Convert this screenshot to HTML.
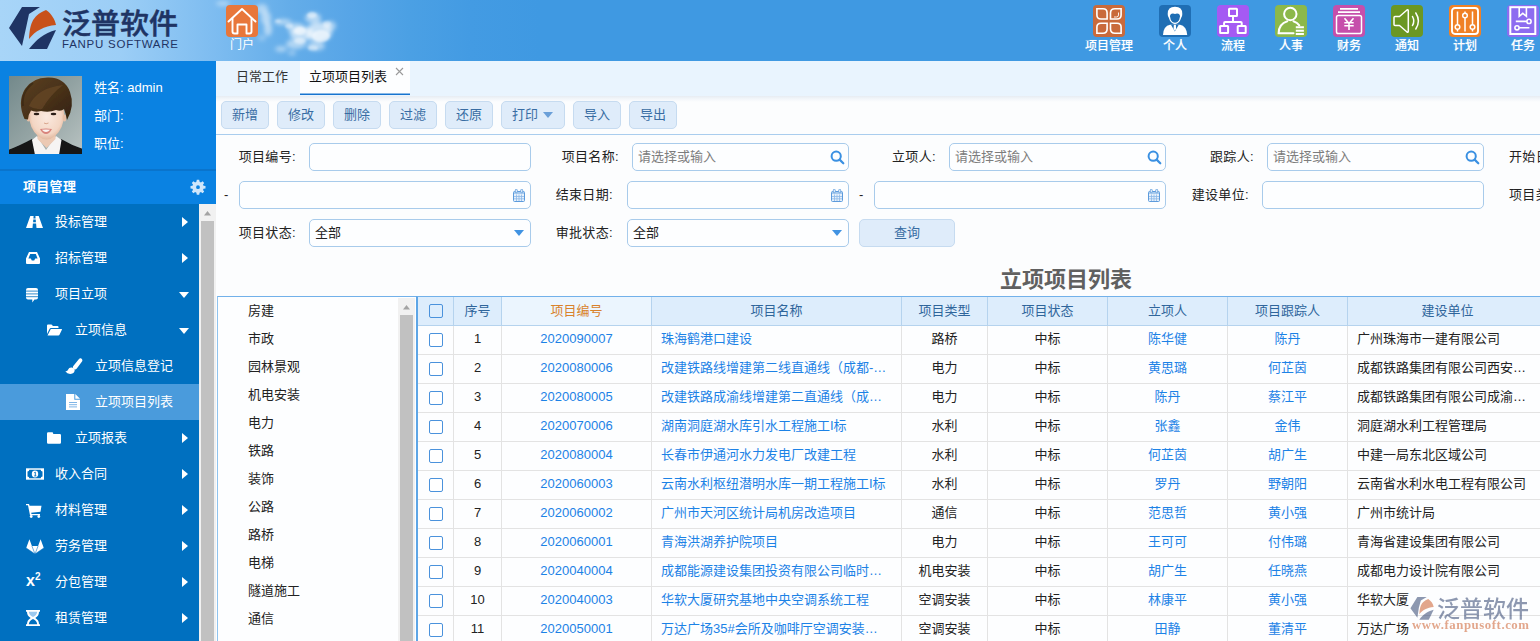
<!DOCTYPE html>
<html lang="zh-CN">
<head>
<meta charset="utf-8">
<title>立项项目列表</title>
<style>
*{box-sizing:border-box;margin:0;padding:0}
html,body{width:1540px;height:641px;overflow:hidden;background:#fcfdfe}
body{position:relative;font-family:"Liberation Sans","Noto Sans CJK SC",sans-serif;font-size:13px;color:#222;line-height:1}
.abs{position:absolute}
/* header */
#hdr{position:absolute;left:0;top:0;width:1540px;height:61px;overflow:hidden;
 background:linear-gradient(90deg,#a8d5f8 0px,#9ccef6 120px,#7dbcf0 216px,#64ade9 290px,#57a5e7 350px,#4ba0e4 410px,#439be3 470px,#3f99e2 540px,#3f99e2 1540px)}
#hdr .cloud{position:absolute;border-radius:50%;background:#fff;filter:blur(6px)}
.nav{position:absolute;top:5px;width:58px;height:50px;text-align:center;color:#fff;font-size:12px}
.nav .ic{position:absolute;left:13px;top:0;width:32px;height:32px;border-radius:4px}
.nav .lb{position:absolute;left:-10px;right:-10px;top:34px;line-height:14px;white-space:nowrap;font-weight:500;text-shadow:0 0 1px rgba(255,255,255,.35)}
/* sidebar */
#side{position:absolute;left:0;top:61px;width:216px;height:580px;background:#0070c0}
#user{position:absolute;left:0;top:0;width:216px;height:108px;background:#0a82e2}
#user .t{position:absolute;left:94px;color:#fff;font-size:13px;line-height:16px;white-space:nowrap}
#mtitle{position:absolute;left:0;top:108px;width:216px;height:35px;background:#0a82e2;border-top:2px solid #0a74cc;color:#fff;font-weight:bold;font-size:13px}
#mtitle span{position:absolute;left:23px;letter-spacing:.3px;top:8px;line-height:16px}
.mi{position:absolute;left:0;width:199px;height:36px;color:#fff;font-size:13px}
.mi .tx{position:absolute;top:10px;line-height:16px;white-space:nowrap}
.mi svg{position:absolute}
.mi .ar{position:absolute;left:182px;top:13px;width:0;height:0;border-left:6px solid #fff;border-top:5px solid transparent;border-bottom:5px solid transparent}
.mi .ad{position:absolute;left:179px;top:16px;width:0;height:0;border-top:6px solid #fff;border-left:5px solid transparent;border-right:5px solid transparent}
.mi.sel{background:#4a9bdc}
#sscroll{position:absolute;left:199px;top:143px;width:17px;height:437px;background:#f1f1f1}
#sscroll .th{position:absolute;left:2px;top:17px;width:13px;height:420px;background:#c1c1c1}
/* main */
#tabs{position:absolute;left:216px;top:61px;width:1324px;height:35px;background:#e9f4fe}
#tabs .tb{position:absolute;top:0;height:35px;font-size:13px;line-height:16px;color:#333}
#tbar{position:absolute;left:216px;top:96px;width:1324px;height:39px;background:linear-gradient(#e7ecf2 0,#f3f6fa 3px,#fcfdfe 6px);border-bottom:1px solid #a9cdee}
.btn{position:absolute;top:5px;height:28px;border:1px solid #c6dbf0;border-radius:5px;background:#dfecfa;color:#386ca3;font-size:13px;text-align:center;line-height:25px}
.lab{position:absolute;letter-spacing:.35px;font-size:13px;line-height:16px;color:#222;white-space:nowrap;text-align:right}
.inp{position:absolute;height:28px;border:1px solid #a8cbeb;border-radius:5px;background:#fdfeff;font-size:13px;line-height:26px;color:#222;padding-left:5px;white-space:nowrap}
.inp.ph{color:#7d7d7d;padding-left:5px}
/* grid */
#tree{position:absolute;left:217px;top:296px;width:199px;height:345px;border-top:1px solid #72b1ea;border-left:1px solid #8fc3ee;background:#fdfeff}
#tree .n{position:absolute;left:30px;margin-top:-1px;font-size:13px;line-height:16px;color:#222;white-space:nowrap}
#grid{position:absolute;left:416px;top:296px;width:1124px;height:345px;border-top:1px solid #72b1ea;border-left:2px solid #5ea6e6;background:#fdfeff;overflow:hidden}
.hc{position:absolute;top:0;height:29px;background:#ddedfc;border-right:1px solid #b5d3ee;border-bottom:1px solid #b5d3ee;text-align:center;font-size:13px;line-height:27px;color:#2f659b;white-space:nowrap}
.row{position:absolute;left:0;width:1130px;height:29px;border-bottom:1px solid #e3e3e3}
.c{position:absolute;top:0;height:29px;border-right:1px solid #e3e3e3;text-align:center;font-size:13px;line-height:26px;color:#222;white-space:nowrap;overflow:hidden}
.c.l{text-align:left;padding-left:9px}
.c.b{color:#1c82e6}
.cb{position:absolute;left:11px;top:7px;width:14px;height:14px;border:1px solid #4a92dc;border-radius:2px;background:#fff}
</style>
</head>
<body>
<div id="hdr">
<!-- clouds -->
<svg class="abs" style="left:200px;top:0" width="180" height="61" viewBox="200 0 180 61">
 <defs><filter id="cb" x="-30%" y="-30%" width="160%" height="160%"><feGaussianBlur stdDeviation="2"/></filter>
 <filter id="cb2" x="-30%" y="-30%" width="160%" height="160%"><feGaussianBlur stdDeviation="1.200"/></filter></defs>
 <g fill="#fff" filter="url(#cb)">
  <ellipse cx="223" cy="3.500" rx="7" ry="2.500" opacity=".4"/>
  <ellipse cx="262" cy="9" rx="6" ry="5" opacity=".45"/>
  <ellipse cx="266" cy="18" rx="5" ry="7" opacity=".5"/>
  <ellipse cx="268" cy="29" rx="4" ry="7" opacity=".5"/>
  <ellipse cx="262" cy="38" rx="4" ry="3" opacity=".25"/>
  <ellipse cx="283" cy="22" rx="9" ry="3" opacity=".5"/>
  <ellipse cx="296" cy="28" rx="9" ry="5" opacity=".5"/>
  <ellipse cx="302" cy="34" rx="12" ry="7" opacity=".6"/>
  <ellipse cx="313" cy="18" rx="8" ry="5" opacity=".55"/>
  <ellipse cx="319" cy="32" rx="13" ry="10" opacity=".65"/>
  <ellipse cx="330" cy="26" rx="6" ry="5" opacity=".5"/>
  <ellipse cx="296" cy="44" rx="10" ry="5" opacity=".5"/>
  <ellipse cx="316" cy="46" rx="9" ry="4.500" opacity=".5"/>
  <ellipse cx="281" cy="49" rx="6" ry="3" opacity=".45"/>
  <ellipse cx="292" cy="53" rx="4" ry="2.500" opacity=".35"/>
 </g>
 <g fill="#fff" filter="url(#cb2)">
  <ellipse cx="312" cy="15" rx="5" ry="3" opacity=".5"/>
  <ellipse cx="300" cy="31" rx="6" ry="4" opacity=".5"/>
  <ellipse cx="321" cy="36" rx="9" ry="6" opacity=".55"/>
  <ellipse cx="300" cy="41" rx="6" ry="3" opacity=".4"/>
  <ellipse cx="289" cy="26" rx="4" ry="2.500" opacity=".4"/>
  <ellipse cx="327" cy="24" rx="4" ry="3" opacity=".4"/>
  <ellipse cx="313" cy="48" rx="5" ry="2.500" opacity=".4"/>
  <ellipse cx="278" cy="21" rx="3" ry="1.500" opacity=".4"/>
 </g>
</svg>
<!-- logo -->
<svg class="abs" style="left:0;top:0" width="216" height="61" viewBox="0 0 216 61">
 <polygon points="9,28 22,7 40,7 29,14 26,28 22,46" fill="#1f3464"/>
 <path d="M29,39 C30,26 31,16 46,10 C52,14 55,20 56,25 C44,26 35,31 29,39 Z" fill="#c8511b"/>
 <path d="M29,49 C36,40 44,33 56,30 L47,49 Z" fill="#1f3464"/>
 <text x="62" y="34" font-family="'Liberation Sans','Noto Sans CJK SC',sans-serif" font-size="28.5" font-weight="500" fill="#1f3464" stroke="#1f3464" stroke-width=".500" textLength="116" lengthAdjust="spacingAndGlyphs">泛普软件</text>
 <text x="62" y="48" font-family="'Liberation Sans',sans-serif" font-size="11.5" fill="#1f3464" textLength="116" lengthAdjust="spacing">FANPU SOFTWARE</text>
</svg>
<!-- home -->
<div class="nav" style="left:213px"><div class="ic" style="background:#e8773b">
 <svg width="32" height="32" viewBox="0 0 32 32" fill="none" stroke="#fff" stroke-width="1.9" stroke-linejoin="round" stroke-linecap="round"><path d="M2.5,16.5 L16,4 L29.5,16.5"/><path d="M6.5,13.5 V26.5 Q6.5,28.5 8.5,28.5 H11.5 V19.5 H20.5 V28.5 H23.5 Q25.5,28.5 25.5,26.5 V13.5"/></svg>
 </div><div class="lb" style="top:33px;font-weight:400;text-shadow:none">门户</div></div>
<div class="nav" style="left:1080px"><div class="ic" style="background:#c96a3b"><svg width="32" height="32" viewBox="0 0 32 32"><g fill="none" stroke="#fff" stroke-width="1.600" stroke-linejoin="miter"><path d="M3.900,3.800 H10 Q14.100,3.800 14.100,8 V14 H8 Q3.900,14 3.900,10 Z"/><path d="M28.100,3.800 H22 Q17.500,3.800 17.500,8 V14 H24 Q28.100,14 28.100,10 Z"/><path d="M3.900,28.200 H10 Q14.100,28.200 14.100,24 V18.300 H8 Q3.900,18.300 3.900,22 Z"/><path d="M28.100,28.200 H22 Q17.500,28.200 17.500,24 V18.300 H24 Q28.100,18.300 28.100,22 Z"/><path d="M21,12 H23.500 Q25.500,12 25.500,10 V7.500" stroke-width=".900"/></g></svg></div><div class="lb">项目管理</div></div>
<div class="nav" style="left:1146px"><div class="ic" style="background:#1f6eb4"><svg width="32" height="32" viewBox="0 0 32 32"><g fill="#fff"><path d="M4,29.900 Q4.500,21 11,19.800 H21 Q27.500,21 28.200,29.900 Z"/><path d="M12,19.700 H19.700 L15.850,26.500 Z" fill="#1f6eb4"/><path d="M14.800,19.700 H16.900 L17.100,24 L15.850,26 L14.600,24 Z"/><path d="M8.700,9 Q8.500,1.800 16,1.800 Q23.500,1.800 23.300,9 Q23.300,11 22.300,12.500 Q21.500,16 19,18 Q16,19.800 13,18 Q10.500,16 9.700,12.500 Q8.700,11 8.700,9 Z"/><path d="M10.900,11 Q11.500,8.500 14,8.600 Q16,9.500 18,8.600 Q20.500,8.500 21.100,11 Q20.800,15 18.500,17 Q16,18.500 13.500,17 Q11.200,15 10.900,11 Z" fill="#1f6eb4"/></g></svg></div><div class="lb">个人</div></div>
<div class="nav" style="left:1204px"><div class="ic" style="background:#a55af3"><svg width="32" height="32" viewBox="0 0 32 32"><g fill="none" stroke="#fff" stroke-width="2" stroke-linejoin="round"><rect x="12" y="3.800" width="8" height="7.100" rx=".500"/><path d="M16,11.500 V17.100 M7.100,20.500 V18.100 Q7.100,17.100 8.100,17.100 H23.700 Q24.700,17.100 24.700,18.100 V20.500"/><rect x="3.100" y="21" width="8" height="7.100" rx=".500"/><rect x="20.700" y="21" width="8" height="7.100" rx=".500"/></g></svg></div><div class="lb">流程</div></div>
<div class="nav" style="left:1262px"><div class="ic" style="background:#8cb84a"><svg width="32" height="32" viewBox="0 0 32 32"><g fill="none" stroke="#fff" stroke-width="2" stroke-linecap="round"><circle cx="15.300" cy="9" r="6.200"/><path d="M18.500,28.200 H3.600 Q3.800,19 12.300,16.300 M18.500,16.300 Q22.500,17.800 24.300,20.300"/><path d="M20.800,22.300 H28.900 M20.800,25.700 H28.900 M20.800,29 H28.900" stroke-linecap="butt" stroke-width="1.900"/></g></svg></div><div class="lb">人事</div></div>
<div class="nav" style="left:1320px"><div class="ic" style="background:#c64fab"><svg width="32" height="32" viewBox="0 0 32 32"><g fill="none" stroke="#fff" stroke-width="1.500"><path d="M7,3.900 H25 M5,7.100 H27" stroke-width="1.700"/><rect x="3.500" y="10.500" width="25" height="18" rx="1.800"/><path d="M11.500,13.300 L16,18.500 L20.500,13.300 M16,18.500 V25 M11.300,17.800 H20.700 M11.300,20.700 H20.700" stroke-width="1.600"/></g></svg></div><div class="lb">财务</div></div>
<div class="nav" style="left:1378px"><div class="ic" style="background:#6b9723"><svg width="32" height="32" viewBox="0 0 32 32"><g fill="none" stroke="#fff" stroke-width="1.500" stroke-linejoin="round" stroke-linecap="round"><path d="M4,11.500 H8.500 L16,5 Q17.300,4.200 17.300,6 V26 Q17.300,27.800 16,27 L8.500,20.500 H4 Q3,20.500 3,19.500 V12.500 Q3,11.500 4,11.500 Z"/><path d="M21.500,11.500 Q24,16 21.500,20.500 M24.800,8 Q30,16 24.800,24"/></g></svg></div><div class="lb">通知</div></div>
<div class="nav" style="left:1436px"><div class="ic" style="background:#f08126"><svg width="32" height="32" viewBox="0 0 32 32"><g fill="none" stroke="#fff" stroke-width="1.500"><rect x="3" y="3" width="26" height="26" rx="3" stroke-width="1.900"/><path d="M8.500,6.500 V19.500 M8.500,24.500 V26.500 M16,6.500 V8 M16,13 V26.500 M23.500,6.500 V19.500 M23.500,24.500 V26.500"/><circle cx="8.500" cy="22" r="2.300"/><circle cx="16" cy="10.500" r="2.300"/><circle cx="23.500" cy="22" r="2.300"/></g></svg></div><div class="lb">计划</div></div>
<div class="nav" style="left:1494px"><div class="ic" style="background:#8d6cf0"><svg width="32" height="32" viewBox="0 0 32 32"><g fill="none" stroke="#fff" stroke-width="1.600"><rect x="3.300" y="2.200" width="25" height="26.800" stroke-width="2"/><path d="M12.200,2.500 V11.300 L15.800,8.300 L19.400,11.300 V2.500"/><path d="M8.800,16.400 H19.800 M12.200,22.800 H22.400"/><circle cx="22" cy="16.400" r="2.100"/><circle cx="10" cy="22.800" r="2.100"/></g></svg></div><div class="lb">任务</div></div>

</div>
<div id="side">
<div id="user">
 <svg class="abs" style="left:9px;top:15px" width="73" height="78" viewBox="0 0 73 78">
  <defs><linearGradient id="avbg" x1="0" y1="0" x2="1" y2="1"><stop offset="0" stop-color="#73898b"/><stop offset=".5" stop-color="#93a3a3"/><stop offset="1" stop-color="#b9c3c2"/></linearGradient>
  <radialGradient id="avsk" cx=".5" cy=".45" r=".6"><stop offset="0" stop-color="#fbe9df"/><stop offset=".7" stop-color="#f3d6c4"/><stop offset="1" stop-color="#dcae92"/></radialGradient>
  <linearGradient id="avhr" x1="0" y1="0" x2="1" y2="1"><stop offset="0" stop-color="#5a4022"/><stop offset=".5" stop-color="#4a3219"/><stop offset="1" stop-color="#33220f"/></linearGradient>
  <filter id="avbl" x="-10%" y="-10%" width="120%" height="120%"><feGaussianBlur stdDeviation=".600"/></filter></defs>
  <rect width="73" height="78" fill="url(#avbg)"/>
  <g filter="url(#avbl)">
  <path d="M-1,79 L-1,74 Q10,70 23,63 L30,79 Z M74,79 L74,73 Q62,69 52,63 L44,79 Z" fill="#121317"/>
  <path d="M23,64 L28,60 L37,74 L47,60 L52.500,64 L50,79 H26 Z" fill="#f6f4f3"/>
  <path d="M28.500,56 H46.500 V63 L37.500,72 L28.500,63 Z" fill="#ecc9b3"/>
  <path d="M20,38 Q20,52 29,60 Q37.500,67 46,60 Q55,52 55,38 Q55,24 37.500,22 Q20,24 20,38 Z" fill="url(#avsk)"/>
  <ellipse cx="19.500" cy="42" rx="1.800" ry="3.500" fill="#e6bfa6"/><ellipse cx="55.500" cy="42" rx="1.800" ry="3.500" fill="#e6bfa6"/>
  <path d="M15.500,43 Q8,26 16,13 Q24,1 40,1.500 Q56,2 61,16 Q66,30 58,44 Q57,38 55,33 Q52,36 47,34 Q40,37 32,35 Q26,36.500 22,34.500 Q19.500,38 19,43.500 Z" fill="url(#avhr)"/>
  <path d="M20,30 Q28,12 54,9 Q42,18 33,33 Q26,34 20,30 Z" fill="#6d4d2a" opacity=".6"/>
  <path d="M14,30 Q12,16 24,7" stroke="#2e1f0e" stroke-width="2" fill="none" opacity=".5"/>
  <ellipse cx="27.500" cy="38" rx="2.800" ry="1.300" fill="#2a1c14"/><ellipse cx="44.500" cy="38" rx="2.800" ry="1.300" fill="#2a1c14"/>
  <path d="M35,47 Q37,48.500 39.500,47" stroke="#d9a58c" stroke-width="1" fill="none"/>
  <path d="M31,53 Q37,52 43,53 Q40.500,58 37,58 Q33.500,58 31,53 Z" fill="#d8847c"/>
  <path d="M32.800,53.800 Q37,53.300 41.200,53.800 Q39,56 37,56 Q35,56 32.800,53.800 Z" fill="#fbf6f3"/>
  </g>
 </svg>
 <div class="t" style="top:19px">姓名: admin</div>
 <div class="t" style="top:47px">部门:</div>
 <div class="t" style="top:75px">职位:</div>
</div>
<div id="mtitle"><span>项目管理</span>
 <svg class="abs" style="left:190px;top:8px" width="16" height="16" viewBox="0 0 16 16"><path d="M6.800,0.800 H9.200 L9.600,2.800 L10.900,3.400 L12.600,2.200 L14.200,3.900 L13,5.500 L13.500,6.800 L15.500,7.100 V9.400 L13.500,9.700 L13,11 L14.200,12.600 L12.600,14.300 L10.900,13.100 L9.600,13.700 L9.200,15.700 H6.800 L6.400,13.700 L5.100,13.100 L3.400,14.300 L1.800,12.600 L3,11 L2.500,9.700 L0.500,9.400 V7.100 L2.500,6.800 L3,5.500 L1.800,3.900 L3.400,2.200 L5.100,3.400 L6.400,2.800 Z M8,6.300 A1.900,1.900 0 1 0 8,10.100 A1.900,1.900 0 1 0 8,6.300 Z" fill="#cfe6fb" fill-rule="evenodd"/></svg>
</div>
<div class="mi" style="top:143px"><svg style="left:26px;top:12px" width="17" height="12" viewBox="0 0 17 12"><path d="M4.300,0 H7.600 L7.400,2.500 H9.600 L9.400,0 H12.700 L17,12 H10.500 L10.100,7.500 H6.900 L6.500,12 H0 Z" fill="#fff"/><path d="M7.300,3.500 H9.700 L9.900,6.300 H7.100 Z" fill="#0070c0"/></svg><div class="tx" style="left:55px">投标管理</div><div class="ar"></div></div>
<div class="mi" style="top:179px"><svg style="left:26px;top:12px" width="14" height="12" viewBox="0 0 14 12"><path d="M3,0 H11 L14,6.500 V11 Q14,12 13,12 H1 Q0,12 0,11 V6.500 Z M4.200,2 L2.400,6.500 H4.800 L5.800,8.500 H8.200 L9.200,6.500 H11.600 L9.800,2 Z" fill="#fff" fill-rule="evenodd"/></svg><div class="tx" style="left:55px">招标管理</div><div class="ar"></div></div>
<div class="mi" style="top:215px"><svg style="left:26px;top:12px" width="12" height="15" viewBox="0 0 12 15"><path d="M2,0 H10 Q12,0 12,2 V9.500 Q12,11.500 10,11.500 H8.500 L6.300,14.500 V11.500 H2 Q0,11.500 0,9.500 V2 Q0,0 2,0 Z" fill="#fff"/><path d="M0,3.100 H12 M0,5.900 H12 M0,8.700 H12" stroke="#0070c0" stroke-width=".800"/></svg><div class="tx" style="left:55px">项目立项</div><div class="ad"></div></div>
<div class="mi" style="top:251px"><svg style="left:46px;top:10px" width="16" height="16" viewBox="0 0 16 16"><path d="M1,3.500 Q1,2.500 2,2.500 H5.500 L7,4 H11.500 Q12.500,4 12.500,5 V6 H5 Q4,6 3.500,7 L1,12 Z" fill="#fff"/><path d="M4.800,7 H15.500 Q16.300,7 15.900,7.800 L13.500,12.700 Q13.200,13.500 12.300,13.500 H1.500 Z" fill="#fff"/></svg><div class="tx" style="left:75px">立项信息</div><div class="ad"></div></div>
<div class="mi" style="top:287px"><svg style="left:65px;top:10px" width="18" height="16" viewBox="0 0 18 16"><path d="M15.800,0.300 Q18.200,1.200 17,3.600 L11.800,10.600 Q10.300,12.300 8.600,10.900 Q7.200,9.500 8.500,7.800 L14,1 Q14.800,0 15.800,0.300 Z" fill="#fff"/><path d="M6.800,9.600 Q9.300,10 9.700,12 Q9.700,15 6.500,15.800 Q2.500,16.500 0.300,13.300 Q2.300,13.500 3,11.800 Q4,9.300 6.800,9.600 Z" fill="#fff"/></svg><div class="tx" style="left:95px">立项信息登记</div></div>
<div class="mi sel" style="top:323px"><svg style="left:66px;top:10px" width="14" height="16" viewBox="0 0 14 16"><path d="M0,0 H8.300 V5.700 H14 V16 H0 Z M9.300,0 L14,4.700 H9.300 Z" fill="#fff"/><path d="M3,8.500 H11 M3,10.700 H11 M3,12.900 H11" stroke="#7fb5e6" stroke-width="1"/></svg><div class="tx" style="left:95px">立项项目列表</div></div>
<div class="mi" style="top:359px"><svg style="left:46px;top:10px" width="16" height="16" viewBox="0 0 16 16"><path d="M1,3.500 Q1,2.300 2.200,2.300 H6 Q7.200,2.300 7.200,3.500 V4 H13.800 Q15,4 15,5.200 V12.500 Q15,13.700 13.800,13.700 H2.200 Q1,13.700 1,12.500 Z" fill="#fff"/></svg><div class="tx" style="left:75px">立项报表</div><div class="ar"></div></div>
<div class="mi" style="top:395px"><svg style="left:26px;top:12px" width="18" height="12" viewBox="0 0 18 12"><path d="M0,0.300 H18 V11.700 H0 Z" fill="#fff"/><path d="M3.300,1.800 H14.700 Q14.700,3.500 16.500,3.500 V8.500 Q14.700,8.500 14.700,10.200 H3.300 Q3.300,8.500 1.500,8.500 V3.500 Q3.300,3.500 3.300,1.800 Z" fill="#0070c0"/><ellipse cx="9" cy="6" rx="3.200" ry="3.400" fill="#fff"/><path d="M8.300,4.600 L9.300,4.100 V7.900 M8.200,7.900 H10.400" stroke="#0070c0" stroke-width=".900" fill="none"/></svg><div class="tx" style="left:55px">收入合同</div><div class="ar"></div></div>
<div class="mi" style="top:431px"><svg style="left:26px;top:12px" width="16" height="14" viewBox="0 0 16 14"><path d="M0,0 H3 L3.600,1.700 H15.500 L14.500,7.700 L5.200,8.700 L5.500,10 H14 V11.300 H4 L2,1.300 H0 Z" fill="#fff"/><circle cx="5.200" cy="12.500" r="1.400" fill="#fff"/><circle cx="12.800" cy="12.500" r="1.400" fill="#fff"/></svg><div class="tx" style="left:55px">材料管理</div><div class="ar"></div></div>
<div class="mi" style="top:467px"><svg style="left:26px;top:11px" width="18" height="15" viewBox="0 0 18 15"><path d="M3.400,0.200 L5.900,7 H12.100 L14.600,0.200 L17.800,9 L9,15 L0.200,9 Z" fill="#fff"/><path d="M5.900,7 L9,15 L12.100,7 M0.200,9 L9,15 L17.800,9" stroke="#0070c0" stroke-width=".700" fill="none" opacity=".8"/></svg><div class="tx" style="left:55px">劳务管理</div><div class="ar"></div></div>
<div class="mi" style="top:503px"><div class="tx" style="left:26px;top:9px;font-weight:bold;font-size:16px;font-family:'Liberation Sans',sans-serif">x<span style="font-size:10px;position:relative;top:-6px">2</span></div><div class="tx" style="left:55px">分包管理</div><div class="ar"></div></div>
<div class="mi" style="top:539px"><svg style="left:26px;top:10px" width="14" height="16" viewBox="0 0 14 16"><path d="M0,0 H14 V1.800 H13 Q13,6 9.300,8 Q13,10 13,14.200 H14 V16 H0 V14.200 H1 Q1,10 4.700,8 Q1,6 1,1.800 H0 Z" fill="#fff"/><path d="M2.800,1.800 H11.200 Q11,5 7,7 Q3,5 2.800,1.800 Z" fill="#9cc9ef"/><path d="M2.800,14.200 Q3,11 7,9 Q11,11 11.200,14.200 Z" fill="#0070c0"/></svg><div class="tx" style="left:55px">租赁管理</div><div class="ar"></div></div>
<div class="mi" style="top:575px"></div>
<div id="sscroll"><svg class="abs" style="left:0;top:0" width="17" height="17"><path d="M5,11.500 L8.500,7 L12,11.500 Z" fill="#a3a3a3"/></svg><div class="th"></div></div>
</div>
<div id="tabs">
 <div class="tb" style="left:20px;top:8px">日常工作</div>
 <div class="abs" style="left:84px;top:0;width:110px;height:34px;background:#fdfeff;border-bottom:1px solid #1874cf;box-shadow:inset 0 -1px 0 rgba(24,116,207,.5)"></div>
 <div class="tb" style="left:93px;top:8px;color:#111">立项项目列表</div>
 <svg class="abs" style="left:179px;top:6px" width="9" height="9" viewBox="0 0 9 9"><path d="M1,1 L8,8 M8,1 L1,8" stroke="#9a9a9a" stroke-width="1.100" fill="none"/></svg>
</div>
<div id="tbar">
<div class="btn" style="left:5px;width:48px">新增</div>
<div class="btn" style="left:61px;width:48px">修改</div>
<div class="btn" style="left:117px;width:48px">删除</div>
<div class="btn" style="left:173px;width:48px">过滤</div>
<div class="btn" style="left:229px;width:48px">还原</div>
<div class="btn" style="left:285px;width:64px;text-align:left;padding-left:10px">打印<span class="abs" style="left:41px;top:10px;width:0;height:0;border-top:6px solid #6a9fd8;border-left:5px solid transparent;border-right:5px solid transparent"></span></div>
<div class="btn" style="left:357px;width:48px">导入</div>
<div class="btn" style="left:413px;width:48px">导出</div>
</div>
<div id="form">
<div class="lab" style="left:176px;width:120px;top:149px">项目编号:</div>
<div class="inp " style="left:309px;top:143px;width:222px"></div>
<div class="lab" style="left:499px;width:120px;top:149px">项目名称:</div>
<div class="inp ph" style="left:632px;top:143px;width:217px">请选择或输入<svg class="abs" style="right:3px;top:6px" width="15" height="15" viewBox="0 0 15 15"><circle cx="6.200" cy="6.200" r="4.600" fill="none" stroke="#3a90e2" stroke-width="2"/><path d="M9.600,9.600 L13.300,13.300" stroke="#3a90e2" stroke-width="2.200" stroke-linecap="round"/></svg></div>
<div class="lab" style="left:816px;width:120px;top:149px">立项人:</div>
<div class="inp ph" style="left:949px;top:143px;width:217px">请选择或输入<svg class="abs" style="right:3px;top:6px" width="15" height="15" viewBox="0 0 15 15"><circle cx="6.200" cy="6.200" r="4.600" fill="none" stroke="#3a90e2" stroke-width="2"/><path d="M9.600,9.600 L13.300,13.300" stroke="#3a90e2" stroke-width="2.200" stroke-linecap="round"/></svg></div>
<div class="lab" style="left:1134px;width:120px;top:149px">跟踪人:</div>
<div class="inp ph" style="left:1267px;top:143px;width:217px">请选择或输入<svg class="abs" style="right:3px;top:6px" width="15" height="15" viewBox="0 0 15 15"><circle cx="6.200" cy="6.200" r="4.600" fill="none" stroke="#3a90e2" stroke-width="2"/><path d="M9.600,9.600 L13.300,13.300" stroke="#3a90e2" stroke-width="2.200" stroke-linecap="round"/></svg></div>
<div class="lab" style="left:1509px;top:149px;text-align:left">开始日期:</div>
<div class="lab" style="left:224px;top:187px;text-align:left">-</div>
<div class="inp " style="left:239px;top:181px;width:292px"><svg class="abs" style="right:5px;top:7px" width="12" height="13" viewBox="0 0 12 13"><rect x=".500" y="2.500" width="11" height="10" rx="1" fill="#e6f0fb" stroke="#5d9bdc"/><rect x="1" y="3" width="10" height="2" fill="#a9cbee"/><rect x="2.300" y=".300" width="2" height="3.400" rx=".900" fill="#eaf3fc" stroke="#5d9bdc" stroke-width=".800"/><rect x="7.700" y=".300" width="2" height="3.400" rx=".900" fill="#eaf3fc" stroke="#5d9bdc" stroke-width=".800"/><path d="M3.500,5.500 V12 M6,5.500 V12 M8.500,5.500 V12 M1,7.500 H11 M1,9.800 H11" stroke="#8db9e8" stroke-width=".800"/></svg></div>
<div class="lab" style="left:493px;width:120px;top:187px">结束日期:</div>
<div class="inp " style="left:627px;top:181px;width:222px"><svg class="abs" style="right:5px;top:7px" width="12" height="13" viewBox="0 0 12 13"><rect x=".500" y="2.500" width="11" height="10" rx="1" fill="#e6f0fb" stroke="#5d9bdc"/><rect x="1" y="3" width="10" height="2" fill="#a9cbee"/><rect x="2.300" y=".300" width="2" height="3.400" rx=".900" fill="#eaf3fc" stroke="#5d9bdc" stroke-width=".800"/><rect x="7.700" y=".300" width="2" height="3.400" rx=".900" fill="#eaf3fc" stroke="#5d9bdc" stroke-width=".800"/><path d="M3.500,5.500 V12 M6,5.500 V12 M8.500,5.500 V12 M1,7.500 H11 M1,9.800 H11" stroke="#8db9e8" stroke-width=".800"/></svg></div>
<div class="lab" style="left:859px;top:187px;text-align:left">-</div>
<div class="inp " style="left:874px;top:181px;width:292px"><svg class="abs" style="right:5px;top:7px" width="12" height="13" viewBox="0 0 12 13"><rect x=".500" y="2.500" width="11" height="10" rx="1" fill="#e6f0fb" stroke="#5d9bdc"/><rect x="1" y="3" width="10" height="2" fill="#a9cbee"/><rect x="2.300" y=".300" width="2" height="3.400" rx=".900" fill="#eaf3fc" stroke="#5d9bdc" stroke-width=".800"/><rect x="7.700" y=".300" width="2" height="3.400" rx=".900" fill="#eaf3fc" stroke="#5d9bdc" stroke-width=".800"/><path d="M3.500,5.500 V12 M6,5.500 V12 M8.500,5.500 V12 M1,7.500 H11 M1,9.800 H11" stroke="#8db9e8" stroke-width=".800"/></svg></div>
<div class="lab" style="left:1129px;width:120px;top:187px">建设单位:</div>
<div class="inp " style="left:1262px;top:181px;width:222px"></div>
<div class="lab" style="left:1509px;top:187px;text-align:left">项目类型:</div>
<div class="lab" style="left:176px;width:120px;top:225px">项目状态:</div>
<div class="inp " style="left:309px;top:219px;width:222px">全部<span class="abs" style="right:6px;top:10px;width:0;height:0;border-top:6px solid #4193e2;border-left:5px solid transparent;border-right:5px solid transparent"></span></div>
<div class="lab" style="left:493px;width:120px;top:225px">审批状态:</div>
<div class="inp " style="left:627px;top:219px;width:222px">全部<span class="abs" style="right:6px;top:10px;width:0;height:0;border-top:6px solid #4193e2;border-left:5px solid transparent;border-right:5px solid transparent"></span></div>
<div class="btn" style="left:859px;top:219px;width:96px;line-height:26px">查询</div>
<div class="abs" style="left:1000px;top:266px;font-size:22px;line-height:28px;font-weight:bold;color:#606060;white-space:nowrap">立项项目列表</div>
</div>
<div id="tree">
<div class="n" style="top:7px">房建</div>
<div class="n" style="top:35px">市政</div>
<div class="n" style="top:63px">园林景观</div>
<div class="n" style="top:91px">机电安装</div>
<div class="n" style="top:119px">电力</div>
<div class="n" style="top:147px">铁路</div>
<div class="n" style="top:175px">装饰</div>
<div class="n" style="top:203px">公路</div>
<div class="n" style="top:231px">路桥</div>
<div class="n" style="top:259px">电梯</div>
<div class="n" style="top:287px">隧道施工</div>
<div class="n" style="top:315px">通信</div>
<div class="abs" style="left:180px;top:1px;width:17px;height:345px;background:#f1f1f1"><svg class="abs" style="left:0;top:0" width="17" height="17"><path d="M5,11.500 L8.500,7 L12,11.500 Z" fill="#a3a3a3"/></svg><div class="abs" style="left:2px;top:17px;width:13px;height:330px;background:#c1c1c1"></div></div>
</div>
<div id="grid">
<div class="hc" style="left:0px;width:36px"><span class="cb" style="background:transparent"></span></div>
<div class="hc" style="left:36px;width:48px">序号</div>
<div class="hc" style="left:84px;width:150px;background:#ebf5fe;color:#d9822b">项目编号</div>
<div class="hc" style="left:234px;width:250px">项目名称</div>
<div class="hc" style="left:484px;width:86px">项目类型</div>
<div class="hc" style="left:570px;width:120px">项目状态</div>
<div class="hc" style="left:690px;width:120px">立项人</div>
<div class="hc" style="left:810px;width:120px">项目跟踪人</div>
<div class="hc" style="left:930px;width:200px">建设单位</div>
<div class="row" style="top:29px"><div class="c" style="left:0;width:36px"><span class="cb"></span></div><div class="c" style="left:36px;width:48px">1</div><div class="c b" style="left:84px;width:150px">2020090007</div><div class="c b l" style="left:234px;width:250px">珠海鹤港口建设</div><div class="c" style="left:484px;width:86px">路桥</div><div class="c" style="left:570px;width:120px">中标</div><div class="c b" style="left:690px;width:120px">陈华健</div><div class="c b" style="left:810px;width:120px">陈丹</div><div class="c l" style="left:930px;width:200px">广州珠海市一建有限公司</div></div>
<div class="row" style="top:58px"><div class="c" style="left:0;width:36px"><span class="cb"></span></div><div class="c" style="left:36px;width:48px">2</div><div class="c b" style="left:84px;width:150px">2020080006</div><div class="c b l" style="left:234px;width:250px">改建铁路线增建第二线直通线（成都-…</div><div class="c" style="left:484px;width:86px">电力</div><div class="c" style="left:570px;width:120px">中标</div><div class="c b" style="left:690px;width:120px">黄思璐</div><div class="c b" style="left:810px;width:120px">何芷茵</div><div class="c l" style="left:930px;width:200px">成都铁路集团有限公司西安…</div></div>
<div class="row" style="top:87px"><div class="c" style="left:0;width:36px"><span class="cb"></span></div><div class="c" style="left:36px;width:48px">3</div><div class="c b" style="left:84px;width:150px">2020080005</div><div class="c b l" style="left:234px;width:250px">改建铁路成渝线增建第二直通线（成…</div><div class="c" style="left:484px;width:86px">电力</div><div class="c" style="left:570px;width:120px">中标</div><div class="c b" style="left:690px;width:120px">陈丹</div><div class="c b" style="left:810px;width:120px">蔡江平</div><div class="c l" style="left:930px;width:200px">成都铁路集团有限公司成渝…</div></div>
<div class="row" style="top:116px"><div class="c" style="left:0;width:36px"><span class="cb"></span></div><div class="c" style="left:36px;width:48px">4</div><div class="c b" style="left:84px;width:150px">2020070006</div><div class="c b l" style="left:234px;width:250px">湖南洞庭湖水库引水工程施工I标</div><div class="c" style="left:484px;width:86px">水利</div><div class="c" style="left:570px;width:120px">中标</div><div class="c b" style="left:690px;width:120px">张鑫</div><div class="c b" style="left:810px;width:120px">金伟</div><div class="c l" style="left:930px;width:200px">洞庭湖水利工程管理局</div></div>
<div class="row" style="top:145px"><div class="c" style="left:0;width:36px"><span class="cb"></span></div><div class="c" style="left:36px;width:48px">5</div><div class="c b" style="left:84px;width:150px">2020080004</div><div class="c b l" style="left:234px;width:250px">长春市伊通河水力发电厂改建工程</div><div class="c" style="left:484px;width:86px">水利</div><div class="c" style="left:570px;width:120px">中标</div><div class="c b" style="left:690px;width:120px">何芷茵</div><div class="c b" style="left:810px;width:120px">胡广生</div><div class="c l" style="left:930px;width:200px">中建一局东北区域公司</div></div>
<div class="row" style="top:174px"><div class="c" style="left:0;width:36px"><span class="cb"></span></div><div class="c" style="left:36px;width:48px">6</div><div class="c b" style="left:84px;width:150px">2020060003</div><div class="c b l" style="left:234px;width:250px">云南水利枢纽潜明水库一期工程施工I标</div><div class="c" style="left:484px;width:86px">水利</div><div class="c" style="left:570px;width:120px">中标</div><div class="c b" style="left:690px;width:120px">罗丹</div><div class="c b" style="left:810px;width:120px">野朝阳</div><div class="c l" style="left:930px;width:200px">云南省水利水电工程有限公司</div></div>
<div class="row" style="top:203px"><div class="c" style="left:0;width:36px"><span class="cb"></span></div><div class="c" style="left:36px;width:48px">7</div><div class="c b" style="left:84px;width:150px">2020060002</div><div class="c b l" style="left:234px;width:250px">广州市天河区统计局机房改造项目</div><div class="c" style="left:484px;width:86px">通信</div><div class="c" style="left:570px;width:120px">中标</div><div class="c b" style="left:690px;width:120px">范思哲</div><div class="c b" style="left:810px;width:120px">黄小强</div><div class="c l" style="left:930px;width:200px">广州市统计局</div></div>
<div class="row" style="top:232px"><div class="c" style="left:0;width:36px"><span class="cb"></span></div><div class="c" style="left:36px;width:48px">8</div><div class="c b" style="left:84px;width:150px">2020060001</div><div class="c b l" style="left:234px;width:250px">青海洪湖养护院项目</div><div class="c" style="left:484px;width:86px">电力</div><div class="c" style="left:570px;width:120px">中标</div><div class="c b" style="left:690px;width:120px">王可可</div><div class="c b" style="left:810px;width:120px">付伟璐</div><div class="c l" style="left:930px;width:200px">青海省建设集团有限公司</div></div>
<div class="row" style="top:261px"><div class="c" style="left:0;width:36px"><span class="cb"></span></div><div class="c" style="left:36px;width:48px">9</div><div class="c b" style="left:84px;width:150px">2020040004</div><div class="c b l" style="left:234px;width:250px">成都能源建设集团投资有限公司临时…</div><div class="c" style="left:484px;width:86px">机电安装</div><div class="c" style="left:570px;width:120px">中标</div><div class="c b" style="left:690px;width:120px">胡广生</div><div class="c b" style="left:810px;width:120px">任晓燕</div><div class="c l" style="left:930px;width:200px">成都电力设计院有限公司</div></div>
<div class="row" style="top:290px"><div class="c" style="left:0;width:36px"><span class="cb"></span></div><div class="c" style="left:36px;width:48px">10</div><div class="c b" style="left:84px;width:150px">2020040003</div><div class="c b l" style="left:234px;width:250px">华软大厦研究基地中央空调系统工程</div><div class="c" style="left:484px;width:86px">空调安装</div><div class="c" style="left:570px;width:120px">中标</div><div class="c b" style="left:690px;width:120px">林康平</div><div class="c b" style="left:810px;width:120px">黄小强</div><div class="c l" style="left:930px;width:200px">华软大厦</div></div>
<div class="row" style="top:319px"><div class="c" style="left:0;width:36px"><span class="cb"></span></div><div class="c" style="left:36px;width:48px">11</div><div class="c b" style="left:84px;width:150px">2020050001</div><div class="c b l" style="left:234px;width:250px">万达广场35#会所及咖啡厅空调安装…</div><div class="c" style="left:484px;width:86px">空调安装</div><div class="c" style="left:570px;width:120px">中标</div><div class="c b" style="left:690px;width:120px">田静</div><div class="c b" style="left:810px;width:120px">董清平</div><div class="c l" style="left:930px;width:200px">万达广场</div></div>
</div>
<svg class="abs" style="left:1404px;top:592px;opacity:.5" width="136" height="46" viewBox="0 0 136 46">
 <g transform="translate(0,2.500) scale(0.495)">
 <polygon points="13,28 27,5 46,5 34,12 30,27 27,47" fill="#1f3464"/>
 <path d="M31,40 C32,26 33,15 49,9 C55,13 59,19 60,25 C47,26 37,31 31,40 Z" fill="#c8511b"/>
 <path d="M31,51 C38,41 47,34 60,31 L50,51 Z" fill="#1f3464"/>
 </g>
 <text x="33" y="25" font-family="'Liberation Sans','Noto Sans CJK SC',sans-serif" font-size="23" font-weight="500" fill="#1f3464" textLength="92" lengthAdjust="spacingAndGlyphs">泛普软件</text>
 <text x="8" y="36.500" font-family="'Liberation Serif',serif" font-size="12.800" font-weight="bold" fill="#c8511b" textLength="117" lengthAdjust="spacing">www.fanpusoft.com</text>
</svg>
</body>
</html>
